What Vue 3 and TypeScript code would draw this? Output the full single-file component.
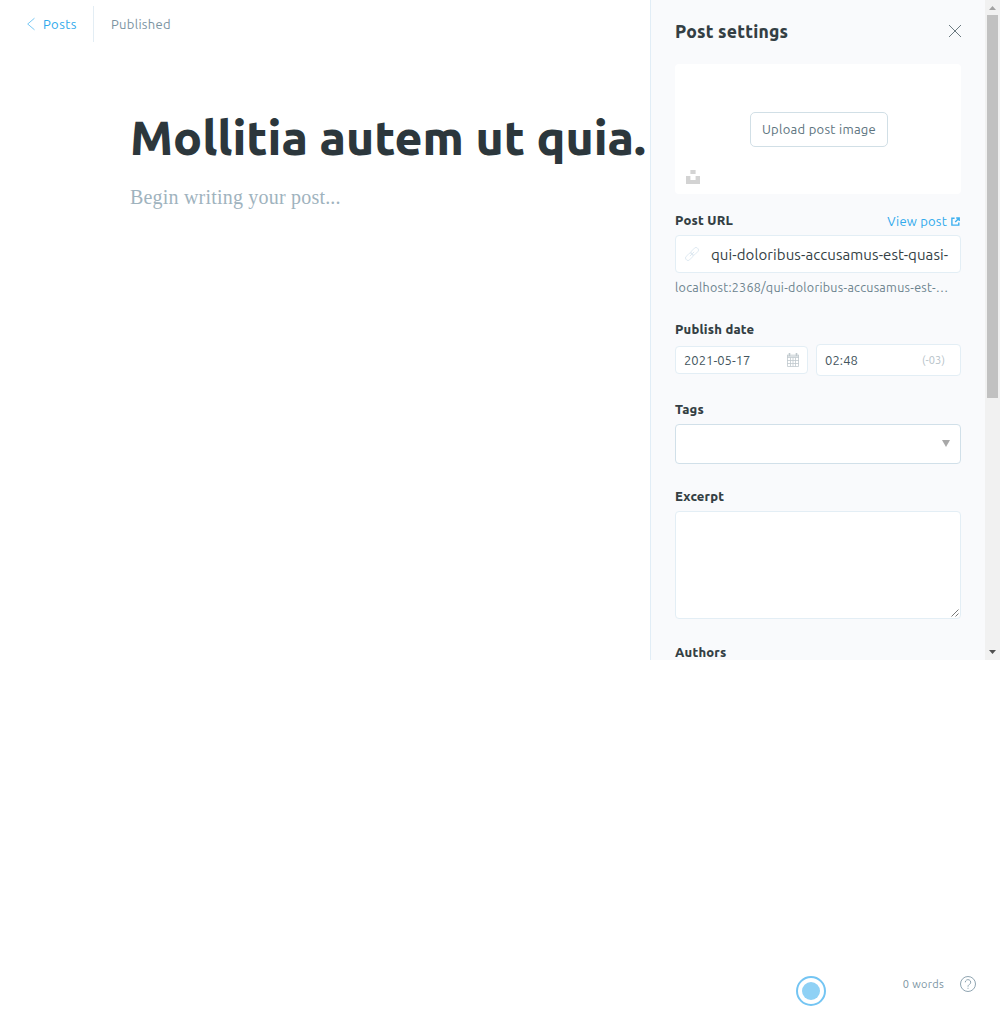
<script setup lang="ts">
import { ref } from 'vue'

const title = ref('Mollitia autem ut quia.')
const slug = ref('qui-doloribus-accusamus-est-quasi-')
const publishDate = ref('2021-05-17')
const publishTime = ref('02:48')
const wordCount = ref(0)
</script>

<template>
  <div class="screen">
    <main class="editor">
      <header class="topbar">
        <a class="back">
          <svg width="9" height="14" viewBox="0 0 9 14"><path d="M7.500 1.200.700 7l6.800 5.800" /></svg>
          <span class="t-posts">Posts</span>
        </a>
        <span class="t-status">Published</span>
      </header>
      <h1 class="title">{{ title }}</h1>
      <p class="body">Begin writing your post...</p>
    </main>

    <aside class="settings">
      <div class="panel">
        <div class="head">
          <h2>Post settings</h2>
          <svg class="close" width="14" height="14" viewBox="0 0 14 14"><path d="M1 1 13 13M13 1 1 13" /></svg>
        </div>

        <div class="uploader">
          <button class="upload"><span>Upload post image</span></button>
          <svg class="unsplash" width="14" height="14" viewBox="0 0 14 14">
            <path d="M4.4 0h5.2v4H4.400zM0 6.100h4.400v4h5.200v-4H14V14H0z" />
          </svg>
        </div>

        <div class="label url-label">
          <span class="t-url">Post URL</span>
          <a class="view">
            <span class="t-view">View post</span>
            <svg width="9" height="9" viewBox="0 0 9 9"><path d="M3.600 1.200H.9v6.900h6.900V5.600M5.200 1h3v3M8 1.200 4.200 5" /></svg>
          </a>
        </div>
        <div class="box slug">
          <svg width="14" height="14" viewBox="0 0 14 14">
            <g transform="rotate(-45 7 7)">
              <rect x="-1" y="4.6" width="8.4" height="4.8" rx="2" />
              <rect x="6.6" y="4.6" width="8.4" height="4.8" rx="2" />
              <path d="M4 7h6" />
            </g>
          </svg>
          <span class="t-slug">{{ slug }}</span>
        </div>
        <p class="preview">localhost:2368/qui-doloribus-accusamus-est-…</p>

        <div class="label date-label"><span class="t-date">Publish date</span></div>
        <div class="dates">
          <div class="box date">
            <span class="t-day">{{ publishDate }}</span>
            <svg width="12" height="14" viewBox="0 0 12 14">
              <path class="top" d="M0 1.500h12V4H0z" />
              <path class="pins" d="M2.500 0v3M9.500 0v3" />
              <path d="M.5 2v11.500h11V2M0 4.500h12M0 7.500h12M0 10.500h12M3.500 4.500v9M6 4.500v9M8.500 4.500v9" />
            </svg>
          </div>
          <div class="box time">
            <span class="t-time">{{ publishTime }}</span>
            <span class="t-zone">(-03)</span>
          </div>
        </div>

        <div class="label tags-label"><span class="t-tags">Tags</span></div>
        <div class="box tags">
          <svg width="8" height="7" viewBox="0 0 8 7"><path d="M0 0h8L4 7z" /></svg>
        </div>

        <div class="label excerpt-label"><span class="t-excerpt">Excerpt</span></div>
        <div class="box excerpt">
          <svg width="8" height="8" viewBox="0 0 8 8"><path d="M.5 7.500 7.500.5M4.500 7.500l3-3" /></svg>
        </div>

        <div class="label authors-label"><span class="t-authors">Authors</span></div>
      </div>
      <div class="scrollbar">
        <svg width="7" height="4" viewBox="0 0 7 4"><path fill="#a3a3a3" d="M0 4 3.500 0 7 4z" /></svg>
        <div class="thumb"></div>
        <svg width="7" height="4" viewBox="0 0 7 4"><path fill="#505050" d="M0 0h7L3.500 4z" /></svg>
      </div>
    </aside>

    <div class="beacon"><i></i></div>
    <footer class="footer">
      <span class="t-words">{{ wordCount }} words</span>
      <svg width="16" height="16" viewBox="0 0 16 16">
        <circle cx="8" cy="8" r="7.5" />
        <path d="M5.300 6.300a2.700 2.600 0 1 1 4.200 2.100C8.400 9.200 8 9.500 8 10.700M8 11.800v1" />
      </svg>
    </footer>
  </div>
</template>

<style>
body { background: #fff; }
</style>

<style scoped>
* { box-sizing: border-box; }
.screen {
  position: relative;
  display: flex;
  align-items: flex-start;
  width: 1000px;
  height: 1016px;
  overflow: hidden;
  font-family: Ubuntu, "Noto Sans", "Open Sans", sans-serif;
  font-size: 13px;
  letter-spacing: 0.3px;
  color: #343f44;
}
svg { display: block; flex: none; fill: none; }
span, h1, h2, p { white-space: nowrap; }
.editor { width: 650px; flex: none; }
.topbar { display: flex; align-items: center; height: 36px; margin: 6px 0 0 27px; }
.back { display: flex; align-items: center; gap: 7px; width: 67px; height: 36px; border-right: 1px solid #e3edf4; color: #3eb0ef; }
.back svg { stroke: #3eb0ef; stroke-width: 0.7; }
.t-status { margin-left: 17px; color: #7c94a2; }
.t-posts { letter-spacing: 0.45px; color: #2fa9ec; }
.title { margin: 60px 0 0 130px; height: 70px; line-height: 70px; font-size: 48px; font-weight: 800; letter-spacing: -0.02px; color: #2c373c; }
.body { margin: 11px 0 0 130px; height: 28px; line-height: 28px; font-family: "Liberation Serif", serif; font-size: 20px; color: #9fb3be; letter-spacing: 0.2px; }

.settings { display: flex; width: 350px; height: 660px; border-left: 1px solid #e1edf6; background: #f9fafc; overflow: hidden; }
.panel { width: 334px; flex: none; padding: 0 24px; }
.head { display: flex; align-items: center; justify-content: space-between; height: 64px; padding-bottom: 2px; }
h2 { margin: 0; font-size: 17.5px; font-weight: 800; letter-spacing: 0.2px; }
.close { stroke: #5b6b73; margin-right: -1px; stroke-width: 0.9; }
.uploader { position: relative; display: flex; justify-content: center; height: 130px; padding: 48px 0 0 2px; background: #fff; border-radius: 4px; }
.upload { width: 138px; height: 35px; padding: 0 0 2px; border: 1px solid #d1dfe6; border-radius: 5px; background: #fff; font: inherit; letter-spacing: 0.28px; color: #5c737e; }
.unsplash { position: absolute; left: 11px; bottom: 10px; fill: #d3d3d3; }
.label { display: flex; align-items: center; justify-content: space-between; height: 20px; font-weight: 800; letter-spacing: 0.2px; }
.url-label { margin-top: 16px; }
.view { display: flex; align-items: center; gap: 4px; padding-top: 2px; margin-right: 1px; font-weight: 400; color: #2fa9ec; }
.view svg { stroke: #3eb0ef; stroke-width: 1.4; }
.box { display: flex; align-items: center; background: #fff; border: 1px solid #e3eef5; border-radius: 4px; }
.slug { height: 38px; margin-top: 5px; padding-left: 9px; gap: 12px; font-size: 15px; }
.slug svg { stroke: #dce8f0; stroke-width: 0.9; }
.t-slug { letter-spacing: 0.09px; }
.preview { margin: 4px 0 0; height: 20px; line-height: 20px; font-size: 12.5px; letter-spacing: 0.28px; color: #6c838e; }
.date-label { margin-top: 22px; }
.dates { display: flex; align-items: center; gap: 8px; height: 32px; margin-top: 5px; }
.date { width: 133px; height: 28px; padding: 0 8px; justify-content: space-between; color: #43555d; }
.t-day { letter-spacing: 0.03px; }
.date svg { stroke: #c0c9ce; stroke-width: 0.8; }
.date .top { fill: #dbe0e3; stroke: none; }
.date .pins { stroke-width: 1.6; stroke: #c0c9ce; }
.time { width: 145px; height: 32px; padding: 0 15px 0 8px; justify-content: space-between; color: #43555d; }
.t-time { letter-spacing: 0.1px; }
.t-zone { font-size: 11px; letter-spacing: 0.1px; color: #b5c1c8; }
.tags-label { margin-top: 23px; }
.tags { height: 40px; margin-top: 5px; padding: 0 10px 2px 0; justify-content: flex-end; border-color: #d1e0e9; }
.tags svg { fill: #a8a8a8; }
.excerpt-label { margin-top: 22px; }
.excerpt { height: 108px; margin-top: 5px; padding: 0 1px 1px 0; align-items: flex-end; justify-content: flex-end; }
.excerpt svg { stroke: #555; stroke-width: 0.8; }
.authors-label { margin-top: 23px; }
.scrollbar { display: flex; flex-direction: column; align-items: center; width: 15px; padding: 6px 0; background: #f1f1f1; }
.thumb { width: 11px; height: 383px; margin: 5px 0 auto; background: #c1c1c1; }

.beacon { position: absolute; left: 796px; top: 976px; display: flex; align-items: center; justify-content: center; width: 30px; height: 30px; border: 2px solid #74c5f3; border-radius: 50%; }
.beacon i { width: 18px; height: 18px; border-radius: 50%; background: #8fd1f5; }
.footer { position: absolute; right: 24px; top: 976px; display: flex; align-items: center; gap: 16px; height: 16px; font-size: 11px; color: #7c94a2; }
.footer svg { stroke: #829aa8; stroke-width: 0.9; }
</style>
